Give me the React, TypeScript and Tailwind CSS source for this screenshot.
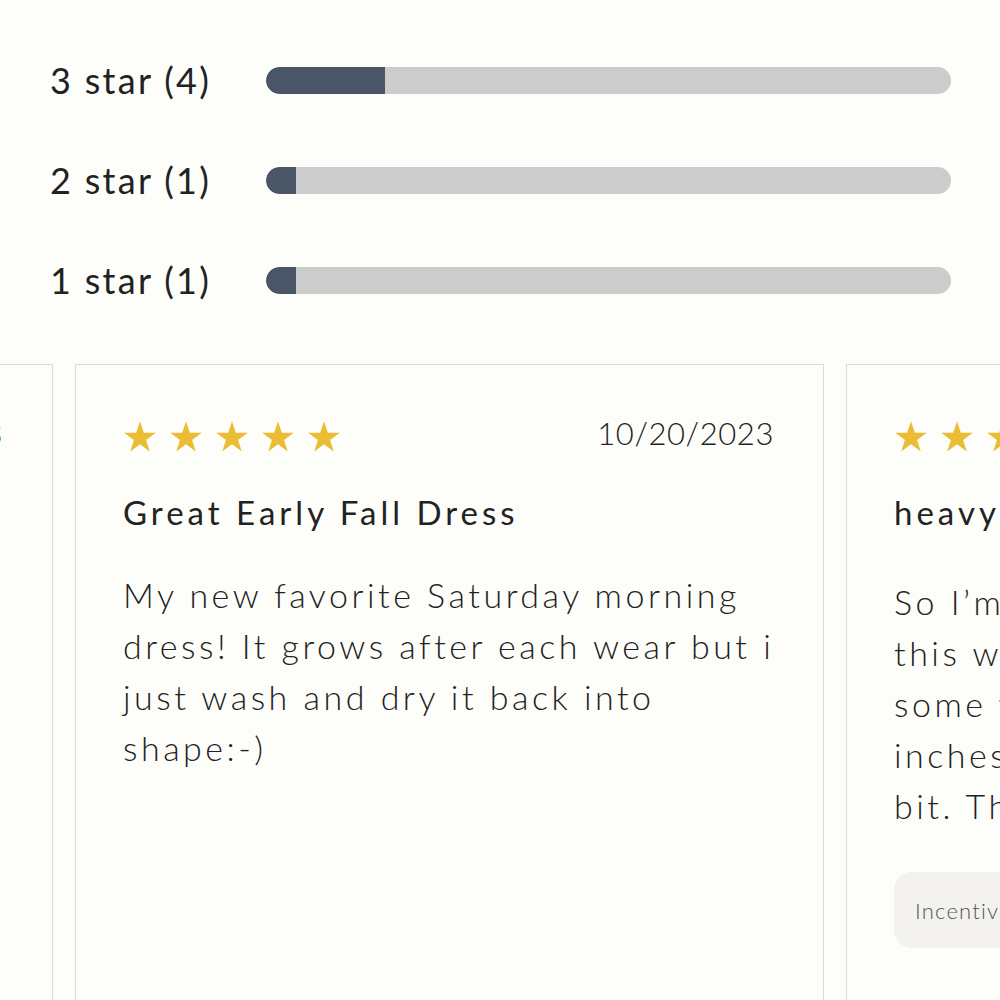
import React from 'react';

const ratings = [
  { label: '3 star (4)', count: 4 },
  { label: '2 star (1)', count: 1 },
  { label: '1 star (1)', count: 1 },
];
const total = 23;

function Star() {
  return (
    <svg width="34" height="33" viewBox="0 0 24 23" className="shrink-0">
      <path
        d="M12 0.8l2.7 8.1h8.5l-6.9 5 2.6 8.2L12 17l-6.9 5.1 2.6-8.2-6.9-5h8.5z"
        fill="#ebbd34"
      />
    </svg>
  );
}

function Stars({ n = 5 }: { n?: number }) {
  return (
    <div className="flex items-center gap-[12px]">
      {Array.from({ length: n }).map((_, i) => (
        <Star key={i} />
      ))}
    </div>
  );
}

function ReviewCard({
  date,
  title,
  lines,
  bodyClass = 'mt-[37px]',
  badge,
}: {
  date: string;
  title: string;
  lines: string[];
  bodyClass?: string;
  badge?: string;
}) {
  return (
    <div className="w-[749px] shrink-0 h-[700px] border border-[#dcdcd8] bg-[#fdfdfa] pl-[47px] pr-[49px] pt-[55px]">
      <div className="flex h-[33px] items-start justify-between">
        <Stars />
        <span className="text-[31px] leading-[27px] tracking-[0.6px] font-light text-[#222]">{date}</span>
      </div>
      <h3 className="mt-[39px] text-[33px] leading-[40px] tracking-[4px] font-normal text-[#222] whitespace-nowrap">{title}</h3>
      <div className={`${bodyClass} text-[34px] leading-[51px] tracking-[3.5px] text-[#222] font-light`}>
        {lines.map((l, i) => (
          <div key={i} className="whitespace-nowrap">{l}</div>
        ))}
      </div>
      {badge && (
        <div className="mt-[41px] inline-flex h-[76px] items-center rounded-[18px] bg-[#f3f2ee] px-[21px] text-[22px] tracking-[1.2px] font-light text-[#555] whitespace-nowrap">
          {badge}
        </div>
      )}
    </div>
  );
}

export default function App() {
  return (
    <div
      className="w-[1000px] h-[1000px] overflow-hidden bg-[#fdfdfa] text-[#222]"
      style={{ fontFamily: 'Lato, "Open Sans", sans-serif' }}
    >
      <div className="pt-[30px] pl-[50px] pr-[49px]">
        {ratings.map((r) => (
          <div key={r.label} className="flex h-[100px] items-center">
            <div className="w-[216px] text-[36px] tracking-[2.3px] text-[#222]">{r.label}</div>
            <div className="flex-1 h-[27px] rounded-full bg-[#cccccc] overflow-hidden">
              <div
                className="h-full bg-[#4a5567] rounded-l-full"
                style={{ width: `${(r.count / total) * 100}%` }}
              />
            </div>
          </div>
        ))}
      </div>

      <div className="mt-[34px] flex gap-[22px] ml-[-696px]">
        <ReviewCard
          date="10/24/2023"
          title="Love it"
          lines={['Super comfortable and cute.']}
        />
        <ReviewCard
          date="10/20/2023"
          title="Great Early Fall Dress"
          lines={[
            'My new favorite Saturday morning',
            'dress! It grows after each wear but i',
            'just wash and dry it back into',
            'shape:-)',
          ]}
        />
        <ReviewCard
          date="10/18/2023"
          title="heavy fabric"
          bodyClass="mt-[44px]"
          lines={[
            'So I’m 5’4 and ordered a small and',
            'this was a little long on me. It has',
            'some weight to it and about 2',
            'inches of extra length. Stretches a',
            'bit. The color is lovely.',
          ]}
          badge="Incentivized review"
        />
      </div>
    </div>
  );
}
